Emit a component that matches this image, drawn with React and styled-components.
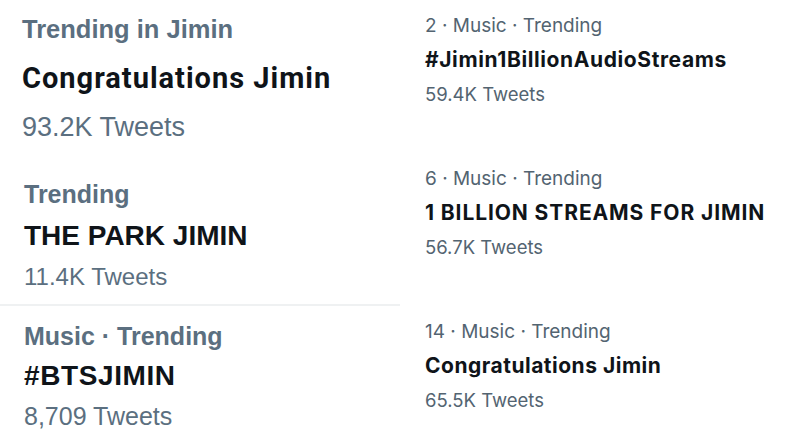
import React from "react";
import styled, { createGlobalStyle } from "styled-components";

const Global = createGlobalStyle`
  html, body { margin: 0; padding: 0; background: #ffffff; }
  body { width: 800px; height: 439px; overflow: hidden; }
`;

const Page = styled.div`
  display: grid;
  grid-template-columns: 400px 400px;
  width: 800px;
  height: 439px;
  background: #fff;
`;

const Column = styled.div`
  display: flex;
  flex-direction: column;
`;

const LeftItem = styled.div`
  display: flex;
  flex-direction: column;
  height: ${(p) => p.$h}px;
  padding: ${(p) => p.$pt}px 0 0 ${(p) => p.$pl}px;
  box-sizing: border-box;
  border-bottom: ${(p) => (p.$divider ? "2px solid #eff1f2" : "none")};
  line-height: ${(p) => p.$lh}px;
  font-family: "Liberation Sans", Arial, sans-serif;
`;

const LeftLabel = styled.div`
  font-size: ${(p) => p.$size}px;
  font-weight: ${(p) => p.$w};
  color: #5b6f80;
  white-space: nowrap;
`;

const LeftTitle = styled.div`
  font-family: ${(p) => p.$font};
  font-size: ${(p) => p.$size}px;
  font-weight: 700;
  letter-spacing: ${(p) => p.$ls}px;
  color: #0f1419;
  white-space: nowrap;
`;

const LeftCount = styled.div`
  font-size: ${(p) => p.$size}px;
  font-weight: 400;
  color: #5b6f80;
  white-space: nowrap;
`;

const RightItem = styled.div`
  display: flex;
  flex-direction: column;
  height: 153px;
  padding: 9px 0 0 25px;
  box-sizing: border-box;
  line-height: 34px;
  font-family: Inter, "Liberation Sans", sans-serif;
`;

const RightLabel = styled.div`
  font-size: 19px;
  font-weight: 400;
  color: #536471;
  white-space: nowrap;
`;

const RightTitle = styled.div`
  font-size: 21px;
  font-weight: 700;
  letter-spacing: ${(p) => p.$ls}px;
  color: #0f1419;
  white-space: nowrap;
`;

const RightCount = styled.div`
  font-size: 18.5px;
  font-weight: 400;
  color: #536471;
  white-space: nowrap;
`;

const ROBOTO = 'Roboto, "Liberation Sans", sans-serif';
const ARIAL = '"Liberation Sans", Arial, sans-serif';

const left = [
  { label: "Trending in Jimin", w: 700, ls: 25.5, title: "Congratulations Jimin", font: ROBOTO, tsz: 29, tls: 1, count: "93.2K Tweets", cs: 27, h: 160, pt: 5, pl: 22, lh: 49 },
  { label: "Trending", w: 600, ls: 25, title: "THE PARK JIMIN", font: ARIAL, tsz: 28, tls: 0, count: "11.4K Tweets", cs: 24, h: 146, pt: 14, pl: 24, lh: 41, divider: true },
  { label: "Music · Trending", w: 600, ls: 25, title: "#BTSJIMIN", font: ARIAL, tsz: 28, tls: 0.6, count: "8,709 Tweets", cs: 25, h: 133, pt: 10, pl: 24, lh: 40 },
];

const right = [
  { label: "2 · Music · Trending", title: "#Jimin1BillionAudioStreams", count: "59.4K Tweets", tls: 0.6 },
  { label: "6 · Music · Trending", title: "1 BILLION STREAMS FOR JIMIN", count: "56.7K Tweets", tls: 0.9 },
  { label: "14 · Music · Trending", title: "Congratulations Jimin", count: "65.5K Tweets", tls: 0.5 },
];

export default function App() {
  return (
    <>
      <Global />
      <Page>
        <Column>
          {left.map((t) => (
            <LeftItem key={t.title} $h={t.h} $pt={t.pt} $pl={t.pl} $lh={t.lh} $divider={t.divider}>
              <LeftLabel $w={t.w} $size={t.ls}>{t.label}</LeftLabel>
              <LeftTitle $font={t.font} $size={t.tsz} $ls={t.tls}>{t.title}</LeftTitle>
              <LeftCount $size={t.cs}>{t.count}</LeftCount>
            </LeftItem>
          ))}
        </Column>
        <Column>
          {right.map((t) => (
            <RightItem key={t.label}>
              <RightLabel>{t.label}</RightLabel>
              <RightTitle $ls={t.tls}>{t.title}</RightTitle>
              <RightCount>{t.count}</RightCount>
            </RightItem>
          ))}
        </Column>
      </Page>
    </>
  );
}
